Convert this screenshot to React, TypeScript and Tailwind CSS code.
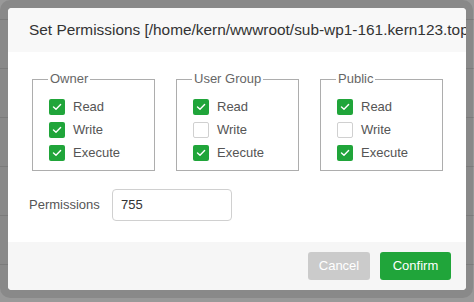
import React from "react";

type Perm = { label: string; on: boolean };

const groups: { title: string; perms: Perm[] }[] = [
  {
    title: "Owner",
    perms: [
      { label: "Read", on: true },
      { label: "Write", on: true },
      { label: "Execute", on: true },
    ],
  },
  {
    title: "User Group",
    perms: [
      { label: "Read", on: true },
      { label: "Write", on: false },
      { label: "Execute", on: true },
    ],
  },
  {
    title: "Public",
    perms: [
      { label: "Read", on: true },
      { label: "Write", on: false },
      { label: "Execute", on: true },
    ],
  },
];

function Check({ on }: { on: boolean }) {
  if (!on) {
    return (
      <span className="w-4 h-4 rounded-[2px] border border-[#d0d0d0] bg-white shrink-0" />
    );
  }
  return (
    <span className="w-4 h-4 rounded-[2px] bg-[#20a53a] flex items-center justify-center shrink-0">
      <svg width="10" height="8" viewBox="0 0 10 8" fill="none">
        <polyline
          points="1.5,4 4,6.3 8.6,1.6"
          stroke="white"
          strokeWidth="1.4"
          strokeLinecap="round"
          strokeLinejoin="round"
        />
      </svg>
    </span>
  );
}

export default function App() {
  return (
    <div
      className="relative w-[474px] h-[302px] overflow-hidden bg-white"
      style={{ fontFamily: '"Liberation Sans", Arial, sans-serif' }}
    >
      {/* page behind the modal */}
      <div className="flex flex-col">
        {[0, 1, 2, 3, 4, 5].map((i) => (
          <div key={i} className="h-[49px] border-b border-[#e6e6e6] first:h-[20px]" />
        ))}
        <div className="flex h-[40px] pt-[10px] text-[13px] text-[#333]">
          <span className="w-[140px] pl-[32px]">3.15 KB</span>
          <span className="w-[190px] pl-[28px]">0 / / kern</span>
          <span>2025-01-03 14:20:28</span>
        </div>
      </div>

      {/* overlay + layer */}
      <div className="absolute inset-0 bg-black/40">
        <div className="w-[473px] h-[298px] rounded-[10px] bg-black/10 pt-[8px] pl-[8px]">
          <div className="w-[458px] h-[282px] rounded-[4px] bg-white overflow-hidden flex flex-col">
            <div className="h-[44px] shrink-0 bg-[#f8f8f8] flex items-center pl-[21px] whitespace-nowrap overflow-hidden text-[15.4px] text-[#333]">
              Set Permissions [/home/kern/wwwroot/sub-wp1-161.kern123.top]
            </div>

            <div className="flex-1 pt-[19px] pl-[24px]">
              <div className="flex gap-[21px]">
                {groups.map((g) => (
                  <fieldset
                    key={g.title}
                    className="w-[123px] h-[100px] border border-[#adadad] pl-[16px] pt-[12px]"
                  >
                    <legend className="-ml-[1px] px-[2px] text-[13px] leading-[16px] text-[#666]">
                      {g.title}
                    </legend>
                    <div className="flex flex-col gap-[7px]">
                      {g.perms.map((p) => (
                        <div key={p.label} className="flex items-center gap-[8px] h-4 text-[13px] text-[#555]">
                          <Check on={p.on} />
                          <span>{p.label}</span>
                        </div>
                      ))}
                    </div>
                  </fieldset>
                ))}
              </div>

              <div className="flex items-center mt-[18px] -ml-[3px]">
                <span className="w-[83px] text-[13px] text-[#555]">Permissions</span>
                <div className="w-[120px] h-[32px] rounded-[4px] border border-[#d0d0d0] flex items-center pl-[8px] text-[13px] text-[#333]">
                  755
                </div>
              </div>
            </div>

            <div className="h-[48px] shrink-0 bg-[#f6f6f6] flex items-center justify-end gap-[10px] pr-[15px]">
              <button className="w-[62px] h-[28px] rounded-[3px] bg-[#cbcbcb] text-white text-[13px]">
                Cancel
              </button>
              <button className="w-[71px] h-[28px] rounded-[3px] bg-[#20a53a] text-white text-[13px]">
                Confirm
              </button>
            </div>
          </div>
        </div>
      </div>
    </div>
  );
}
